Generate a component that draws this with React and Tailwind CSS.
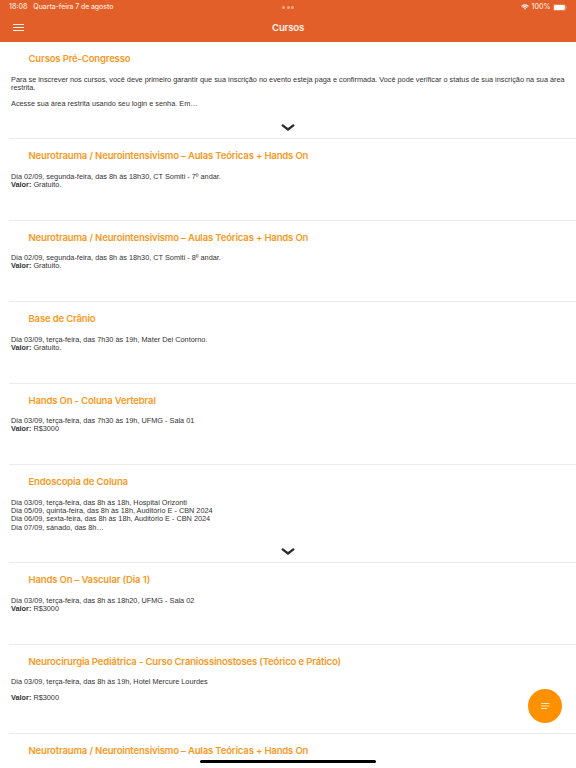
const SOMITI = 'Dia 02/09, segunda-feira, das 8h às 18h30, CT Somiti - ';
const AULAS = 'Neurotrauma / Neurointensivismo – Aulas Teóricas + Hands On';

const courses = [
  {
    title: 'Cursos Pré-Congresso',
    height: 'h-[97px]',
    lines: [
      'Para se inscrever nos cursos, você deve primeiro garantir que sua inscrição no evento esteja paga e confirmada. Você pode verificar o status de sua inscrição na sua área',
      'restrita.',
      null,
      'Acesse sua área restrita usando seu login e senha. Em…',
    ],
    expandable: true,
  },
  { title: AULAS, height: 'h-[81.5px]', lines: [SOMITI + '7º andar.'], price: 'Gratuito.' },
  { title: AULAS, height: 'h-[81.5px]', lines: [SOMITI + '8º andar.'], price: 'Gratuito.' },
  { title: 'Base de Crânio', height: 'h-[81.5px]', lines: ['Dia 03/09, terça-feira, das 7h30 às 19h, Mater Dei Contorno.'], price: 'Gratuito.' },
  { title: 'Hands On - Coluna Vertebral', height: 'h-[81.5px]', lines: ['Dia 03/09, terça-feira, das 7h30 às 19h, UFMG - Sala 01'], price: 'R$3000' },
  {
    title: 'Endoscopia de Coluna',
    height: 'h-[98px]',
    lines: [
      'Dia 03/09, terça-feira, das 8h às 18h, Hospital Orizonti',
      'Dia 05/09, quinta-feira, das 8h às 18h, Auditório E - CBN 2024',
      'Dia 06/09, sexta-feira, das 8h às 18h, Auditório E - CBN 2024',
      'Dia 07/09, sánado, das 8h…',
    ],
    expandable: true,
  },
  { title: 'Hands On – Vascular (Dia 1)', height: 'h-[81.5px]', lines: ['Dia 03/09, terça-feira, das 8h às 18h20, UFMG - Sala 02'], price: 'R$3000' },
  { title: 'Neurocirurgia Pediátrica - Curso Craniossinostoses (Teórico e Prático)', height: 'h-[89px]', lines: ['Dia 03/09, terça-feira, das 8h às 19h, Hotel Mercure Lourdes', null], price: 'R$3000' },
  { title: AULAS, height: 'h-[81.5px]', lines: [] },
];

function StatusBar() {
  return (
    <div className="grid h-[14px] grid-cols-3 items-center px-[9px] text-[7px] font-medium text-[#fde6da]">
      <div className="flex gap-[6px] whitespace-nowrap">
        <span>18:08</span>
        <span className="tracking-[-0.08px]">Quarta-feira 7 de agosto</span>
      </div>
      <div className="flex justify-center gap-[1.6px]">
        <span className="size-[3px] rounded-full bg-[#f5ab83]" />
        <span className="size-[3px] rounded-full bg-[#f5ab83]" />
        <span className="size-[3px] rounded-full bg-[#f5ab83]" />
      </div>
      <div className="flex items-center justify-end">
        <svg className="mr-[2.5px] h-[6px] w-[8px]" viewBox="0 0 16 12" fill="none" stroke="#fff" strokeWidth="2.1">
          <path d="M1 4.6a10 10 0 0 1 14 0" />
          <path d="M3.7 7.4a6.2 6.2 0 0 1 8.6 0" />
          <path d="M5.8 9.2 8 11.6l2.2-2.4a3.2 3.2 0 0 0-4.4 0Z" fill="#fff" stroke="none" />
        </svg>
        <span>100%</span>
        <svg className="ml-[2.5px] h-[7px] w-[14px]" viewBox="0 0 14 7">
          <rect x="0.3" y="0.3" width="12.2" height="6.4" rx="1.8" fill="none" stroke="#f6b596" strokeWidth="0.5" />
          <rect x="1" y="1" width="10.8" height="5" rx="1.2" fill="#fff" />
          <path d="M13.1 2.4c.9.3.9 1.900 0 2.200z" fill="#f6b596" />
        </svg>
      </div>
    </div>
  );
}

function Course({ title, height, lines, price, expandable }) {
  return (
    <li className={`flex shrink-0 flex-col ${height}`}>
      <h2 className="mt-[10px] ml-[28.5px] h-[14px] text-[9.5px] leading-[14px] font-semibold tracking-[-0.15px] whitespace-nowrap text-[#f8991d]">{title}</h2>
      <div className="mt-[9.5px] ml-[11px] font-['Liberation_Sans',Arial,sans-serif] text-[7.32px] leading-[8.4px] whitespace-nowrap text-[#333]">
        {lines.map((line, i) => (line ? <p key={i}>{line}</p> : <div key={i} className="h-[7.2px]" />))}
        {price && (
          <p>
            <b>Valor:</b> {price}
          </p>
        )}
      </div>
      <div className="mt-auto ml-[9px] border-b border-[#ebebeb]">
        {expandable && (
          <svg className="mb-[6.5px] ml-[272px] h-[9px] w-[14px]" viewBox="0 0 14 9" fill="none" stroke="#2c2c30" strokeWidth="2.3" strokeLinejoin="round">
            <path d="M1 1.800 7 6.500l6-4.700" />
          </svg>
        )}
      </div>
    </li>
  );
}

export default function App() {
  return (
    <div className="relative flex h-[768px] w-[576px] flex-col overflow-hidden bg-white font-['Inter',sans-serif]">
      <header className="h-[42px] shrink-0 bg-[#e35f29]">
        <StatusBar />
        <div className="grid h-[28px] grid-cols-3 items-center px-[13px]">
          <button aria-label="Menu" className="w-[11px]">
            <svg className="block h-[8px] w-[11px]" viewBox="0 0 11 8" stroke="#fff0e8" strokeWidth="1.2">
              <path d="M0 .5h11M0 3.500h11M0 6.500h11" />
            </svg>
          </button>
          <h1 className="text-center text-[9.6px] font-semibold tracking-[-0.2px] text-[#fff0e8]">Cursos</h1>
        </div>
      </header>
      <ul className="flex min-h-0 flex-1 flex-col overflow-hidden">
        {courses.map((course, i) => (
          <Course key={i} {...course} />
        ))}
      </ul>
      <button aria-label="Opções" className="absolute top-[689px] left-[528px] flex size-[34px] items-center justify-center rounded-full bg-[#ff9100]">
        <svg className="h-[8px] w-[10px]" viewBox="0 0 10 8" stroke="#ffe6bd" strokeWidth="1.1">
          <path d="M1 1.500h8.500M1 4h8.500M1 6.500h6" />
        </svg>
      </button>
      <div className="absolute top-[760px] left-[200px] h-[3px] w-[176px] rounded-full bg-black" />
    </div>
  );
}
